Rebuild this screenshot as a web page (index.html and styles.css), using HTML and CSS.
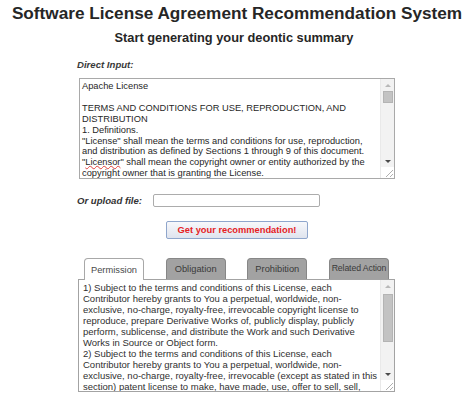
FILE: index.html
```html
<!DOCTYPE html>
<html lang="en">
<head>
<meta charset="utf-8">
<title>Software License Agreement Recommendation System</title>
<link rel="stylesheet" href="styles.css">
</head>
<body>
<div class="page">
  <h1 class="title">Software License Agreement Recommendation System</h1>
  <h2 class="subtitle">Start generating your deontic summary</h2>
  <div class="panel">
    <div class="field-label direct-label">Direct Input:</div>
    <div class="textbox input-box">
      <div class="textbox-content input-content">
        <p>Apache License</p>
        <p>&nbsp;</p>
        <p>TERMS AND CONDITIONS FOR USE, REPRODUCTION, AND<br>DISTRIBUTION</p>
        <p>1. Definitions.</p>
        <p>"License" shall mean the terms and conditions for use, reproduction,<br>and distribution as defined by Sections 1 through 9 of this document.</p>
        <p>"<span class="misspelled">Licensor</span>" shall mean the copyright owner or entity authorized by the<br>copyright owner that is granting the License.</p>
      </div>
      <div class="scrollbar">
        <div class="sb-btn"><span class="arrow-up"></span></div>
        <div class="sb-track"><div class="sb-thumb thumb-small"></div></div>
        <div class="sb-btn"><span class="arrow-down"></span></div>
        <div class="sb-corner">
          <svg width="11" height="11" viewBox="0 0 11 11"><path d="M10 3 L3 10 M10 7 L7 10" stroke="#b0b0b0" stroke-width="1" fill="none"/></svg>
        </div>
      </div>
    </div>

    <div class="upload-row">
      <span class="field-label upload-label">Or upload file:</span>
      <div class="file-field"></div>
    </div>

    <div class="button-row">
      <button class="submit-btn" type="button">Get your recommendation!</button>
    </div>

    <div class="tabs">
      <div class="tab active">Permission</div>
      <div class="tab">Obligation</div>
      <div class="tab">Prohibition</div>
      <div class="tab tab-small">Related Action</div>
    </div>
    <div class="textbox result-box">
      <div class="textbox-content result-content">
        <p>1) Subject to the terms and conditions of this License, each<br>Contributor hereby grants to You a perpetual, worldwide, non-<br>exclusive, no-charge, royalty-free, irrevocable copyright license to<br>reproduce, prepare Derivative Works of, publicly display, publicly<br>perform, sublicense, and distribute the Work and such Derivative<br>Works in Source or Object form.</p>
        <p>2) Subject to the terms and conditions of this License, each<br>Contributor hereby grants to You a perpetual, worldwide, non-<br>exclusive, no-charge, royalty-free, irrevocable (except as stated in this<br>section) patent license to make, have made, use, offer to sell, sell,</p>
      </div>
      <div class="scrollbar">
        <div class="sb-btn"><span class="arrow-up"></span></div>
        <div class="sb-track"><div class="sb-thumb thumb-large"></div></div>
        <div class="sb-btn"><span class="arrow-down"></span></div>
        <div class="sb-corner">
          <svg width="11" height="11" viewBox="0 0 11 11"><path d="M10 3 L3 10 M10 7 L7 10" stroke="#b0b0b0" stroke-width="1" fill="none"/></svg>
        </div>
      </div>
    </div>
  </div>
</div>
</body>
</html>
```
FILE: styles.css
```css
html, body {
  margin: 0;
  padding: 0;
  background: #ffffff;
}

body {
  font-family: "Liberation Sans", Arial, sans-serif;
  color: #222222;
}

.page {
  width: 474px;
  overflow: hidden;
}

.title {
  margin: 3px 0 0;
  font-size: 17.2px;
  line-height: 20px;
  font-weight: bold;
  text-align: center;
  color: #262626;
  white-space: nowrap;
}

.subtitle {
  margin: 7px 0 0;
  padding-right: 6px;
  font-size: 12.8px;
  line-height: 15px;
  font-weight: bold;
  text-align: center;
  color: #262626;
}

.panel {
  width: 316px;
  margin: 14px auto 0;
}

.field-label {
  font-size: 9.6px;
  line-height: 12px;
  font-weight: bold;
  font-style: italic;
  color: #333333;
}

.direct-label {
  margin-left: -2px;
  color: #3a3a3a;
}

.textbox {
  display: flex;
  border: 1px solid #a9a9a9;
  background: #ffffff;
  box-sizing: border-box;
}

.input-box {
  margin-top: 7px;
  height: 101px;
}

.result-box {
  height: 113px;
  margin-left: -1px;
  width: 317px;
  border-color: #a3a3a3;
}

.textbox-content {
  flex: 1;
  min-width: 0;
  overflow: hidden;
  white-space: nowrap;
  color: #262626;
}

.textbox-content p {
  margin: 0;
}

.input-content {
  padding: 2px 2px 0 2px;
  font-size: 9.3px;
  line-height: 10.9px;
}

.result-content {
  padding: 2px 3px 0 4px;
  font-size: 9.5px;
  line-height: 11px;
  color: #303030;
}

.misspelled {
  text-decoration: underline wavy #e0403a;
  text-decoration-thickness: 1px;
  text-underline-offset: 0;
}

.scrollbar {
  width: 13px;
  flex-shrink: 0;
  display: flex;
  flex-direction: column;
  background: #f2f2f2;
  border-left: 1px solid #e9e9e9;
}

.sb-btn {
  height: 12px;
  display: flex;
  align-items: center;
  justify-content: center;
}

.arrow-up {
  width: 0;
  height: 0;
  border-left: 3px solid transparent;
  border-right: 3px solid transparent;
  border-bottom: 3px solid #b8b8b8;
}

.arrow-down {
  width: 0;
  height: 0;
  border-left: 3px solid transparent;
  border-right: 3px solid transparent;
  border-top: 3px solid #4a4a4a;
}

.sb-track {
  flex: 1;
  display: flex;
  flex-direction: column;
  align-items: center;
}

.sb-thumb {
  width: 10px;
  background: #c3c3c3;
  border: 1px solid #b4b4b4;
  box-sizing: border-box;
}

.thumb-small {
  height: 12px;
}

.thumb-large {
  margin-top: 2px;
  height: 48px;
}

.sb-corner {
  height: 11px;
  display: flex;
  justify-content: flex-end;
  align-items: flex-end;
  background: #ffffff;
}

.sb-corner svg {
  display: block;
}

.upload-row {
  display: flex;
  align-items: center;
  margin-top: 15px;
}

.upload-label {
  width: 76px;
  margin-left: -2px;
  padding-top: 1px;
  flex-shrink: 0;
}

.file-field {
  width: 167px;
  height: 13px;
  border: 1px solid #acacac;
  border-radius: 2px;
  box-sizing: border-box;
  background: #ffffff;
}

.button-row {
  display: flex;
  justify-content: center;
  margin-top: 14px;
}

.submit-btn {
  width: 142px;
  height: 18px;
  padding: 0;
  box-sizing: border-box;
  border: 1px solid #8fa6cc;
  border-radius: 2px;
  background: linear-gradient(#f7f8fb, #dfe4ee);
  font-family: "Liberation Sans", Arial, sans-serif;
  font-size: 9.3px;
  font-weight: bold;
  color: #e5211f;
  line-height: 16px;
}

.tabs {
  display: flex;
  justify-content: space-between;
  align-items: flex-start;
  padding: 0 6px 0 5px;
  margin-top: 19px;
  height: 21px;
  position: relative;
  z-index: 1;
}

.tab {
  width: 60px;
  height: 21px;
  box-sizing: border-box;
  border: 1px solid #878787;
  border-bottom: none;
  border-radius: 4px 4px 0 0;
  background: #a2a2a2;
  color: #3a3a3a;
  font-size: 9.3px;
  line-height: 21px;
  text-align: center;
  white-space: nowrap;
  overflow: hidden;
}

.tab.active {
  height: 22px;
  background: #ffffff;
  border-color: #a8a8a8;
  color: #4a4a4a;
  line-height: 22px;
}

.tab-small {
  font-size: 8.7px;
  line-height: 18px;
  letter-spacing: -0.1px;
}
```
